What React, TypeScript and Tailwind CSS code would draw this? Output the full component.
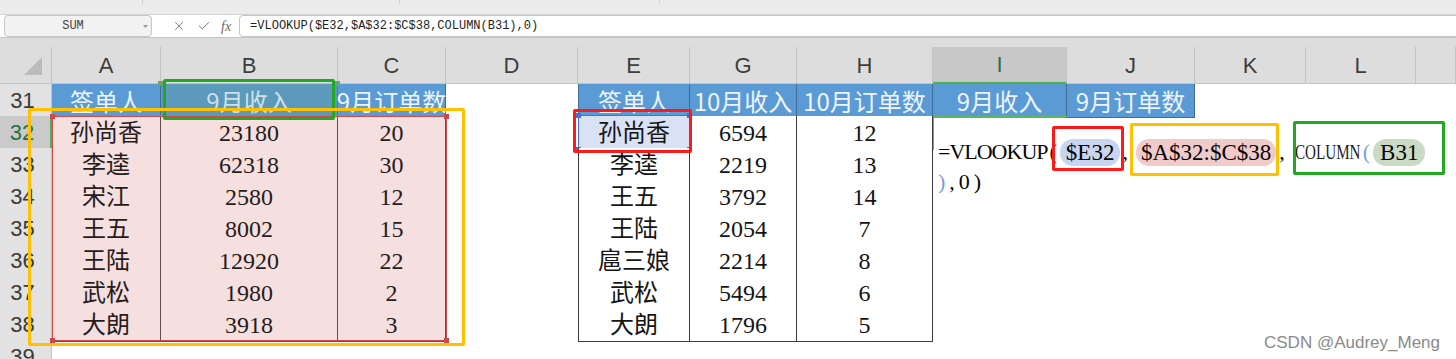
import React from 'react';
import { X, Check } from 'lucide-react';

const GRID =
  'grid grid-cols-[52px_109px_177px_108px_132px_112px_107px_136px_134px_128px_111px_110px_1fr]';

const LETTERS = ['A', 'B', 'C', 'D', 'E', 'G', 'H', 'I', 'J', 'K', 'L', ''];

const LEFT = [
  ['孙尚香', '23180', '20'],
  ['李逵', '62318', '30'],
  ['宋江', '2580', '12'],
  ['王五', '8002', '15'],
  ['王陆', '12920', '22'],
  ['武松', '1980', '2'],
  ['大朗', '3918', '3'],
];

const RIGHT = [
  ['孙尚香', '6594', '12'],
  ['李逵', '2219', '13'],
  ['王五', '3792', '14'],
  ['王陆', '2054', '7'],
  ['扈三娘', '2214', '8'],
  ['武松', '5494', '6'],
  ['大朗', '1796', '5'],
];

type Kind = 'empty' | 'blue' | 'blueSel' | 'pink' | 'white' | 'sel';

const KIND: Record<Kind, string> = {
  empty: '',
  blue: "bg-[#5b9bd5] text-[#eef4fb] border-r border-b border-[#3f6d98] font-['Noto_Sans_CJK_SC',sans-serif] text-[24px]",
  blueSel:
    "bg-[#5b9aba] text-[#cfe0ea] border-r border-b border-[#4a7f99] font-['Noto_Sans_CJK_SC',sans-serif] text-[24px]",
  pink: "bg-[#f5dfdf] text-[#261c1c] border-r border-b border-[#5f4f4f] font-['Liberation_Serif','Noto_Sans_CJK_SC',serif] text-[24px]",
  white:
    "bg-white text-[#151515] border-r border-b border-[#3c3c3c] font-['Liberation_Serif','Noto_Sans_CJK_SC',serif] text-[24px]",
  sel: "bg-[#d9e2f5] text-[#151515] border-r border-b border-[#3c3c3c] font-['Liberation_Serif','Noto_Sans_CJK_SC',serif] text-[24px]",
};

function Cell({
  kind = 'empty',
  className = '',
  children,
}: {
  kind?: Kind;
  className?: string;
  children?: React.ReactNode;
}) {
  return (
    <div
      className={`relative h-full flex items-center justify-center whitespace-nowrap leading-none ${KIND[kind]} ${className}`}
    >
      {children}
    </div>
  );
}

function RowHead({ n, active = false }: { n: number; active?: boolean }) {
  return (
    <div
      className={`h-full flex items-center justify-center pr-[6px] border-b border-[#c9c9c9] font-['Liberation_Sans',sans-serif] text-[22px] ${
        active
          ? 'bg-[#cacaca] text-[#217346] border-r-2 border-r-[#4caf50]'
          : 'bg-[#e2e2e2] text-[#3a3a3a] border-r border-r-[#c2c2c2]'
      }`}
    >
      {n}
    </div>
  );
}

function Handle({ className }: { className: string }) {
  return <div className={`absolute w-[5px] h-[5px] ${className}`} />;
}

function Pill({ className, children }: { className: string; children: React.ReactNode }) {
  return (
    <span className={`h-[27px] flex items-center rounded-[13px] leading-none ${className}`}>
      {children}
    </span>
  );
}

function FormulaEditor() {
  return (
    <div className="absolute left-[4px] top-[20px] w-[520px] z-10 text-[#050505] font-['Liberation_Serif',serif] leading-none">
      <div className="h-[30px] flex items-center whitespace-nowrap">
        <span className="text-[22px] tracking-[-1px]">=VLOOKUP</span>
        <span className="text-[22px] ml-[2px]">(</span>
        <Pill className="ml-[3px] px-[6px] bg-[#c8d5f0] text-[23px]">$E32</Pill>
        <span className="text-[22px] ml-[2px]">,</span>
        <Pill className="ml-[8px] px-[5px] bg-[#f1caca] text-[23px]">$A$32:$C$38</Pill>
        <span className="text-[22px] ml-[3px]">,</span>
        <span className="ml-[10px] w-[64px] overflow-visible">
          <span className="inline-block origin-left scale-x-[0.72] text-[21px] text-[#1c1c1c]">
            COLUMN
          </span>
        </span>
        <span className="text-[22px] ml-[4px] text-[#7c9ce0]">(</span>
        <Pill className="ml-[3px] px-[7px] bg-[#cadac4] text-[23px]">B31</Pill>
      </div>
      <div className="h-[30px] flex items-center whitespace-nowrap text-[22px] tracking-[4px]">
        <span className="text-[#7c9ce0]">)</span>
        <span>,0)</span>
      </div>
    </div>
  );
}

export default function App() {
  return (
    <div className="relative w-[1456px] h-[359px] overflow-hidden bg-white">
      {/* tab strip */}
      <div className="h-[15px] bg-[#ececec] border-b border-[#d3d3d3] flex">
        <div className="w-[143px] h-[4px] border-r border-[#d0d0d0]" />
        <div className="w-[257px] h-[4px] border-r border-[#d0d0d0]" />
        <div className="w-[260px] h-[4px] border-r border-[#d0d0d0]" />
      </div>

      {/* formula bar */}
      <div className="h-[23px] flex items-start bg-white border-b border-[#c6c6c6]">
        <div className="ml-[4px] w-[148px] h-[22px] rounded-[4px] border border-[#c6c6c6] bg-[#f2f2f2] relative flex items-center justify-center pr-[10px] font-['Liberation_Mono',monospace] text-[12px] text-[#444]">
          SUM
          <svg className="absolute right-[3px] top-[9px]" width="5" height="3" viewBox="0 0 5 3">
            <path d="M0 0 L5 0 L2.5 3 Z" fill="#9a9a9a" />
          </svg>
        </div>
        <div className="h-[22px] flex items-center ml-[20px] text-[#6a6a6a]">
          <X size={14} strokeWidth={1.4} />
        </div>
        <div className="h-[22px] flex items-center ml-[11px] text-[#6a6a6a]">
          <Check size={14} strokeWidth={1.6} />
        </div>
        <div className="h-[22px] flex items-center ml-[10px] italic font-['Liberation_Serif',serif] text-[14px] text-[#6a6a6a]">
          fx
        </div>
        <div className="ml-[8px] flex-1 -mr-[10px] h-[22px] rounded-[4px] border border-[#c6c6c6] bg-white flex items-center pl-[10px] font-['Liberation_Mono',monospace] text-[12px] text-[#1e1e1e]">
          =VLOOKUP($E32,$A$32:$C$38,COLUMN(B31),0)
        </div>
      </div>

      {/* column headers */}
      <div className={`${GRID} h-[46px] bg-[#dddddd] items-end`}>
        <div className="relative h-[37px] border-r border-b border-[#c3c3c3]">
          <svg className="absolute left-[24px] top-[10px]" width="18" height="18" viewBox="0 0 18 18">
            <path d="M18 0 L18 18 L0 18 Z" fill="#bcbcbc" />
          </svg>
        </div>
        {LETTERS.map((l, i) => (
          <div
            key={i}
            className={`h-[37px] flex items-center justify-center border-r border-[#c3c3c3] font-['Liberation_Sans',sans-serif] text-[22px] ${
              l === 'I'
                ? 'bg-[#c8c8c8] text-[#217346] border-b-2 border-b-[#4caf50]'
                : 'text-[#3e3e3e] border-b border-b-[#c3c3c3]'
            }`}
          >
            {l}
          </div>
        ))}
      </div>

      {/* row 31 */}
      <div className={`${GRID} h-[32px]`}>
        <RowHead n={31} />
        <Cell kind="blue">签单人</Cell>
        <Cell kind="blueSel">
          9月收入
          <Handle className="-left-[3px] -top-[3px] bg-[#6aa46a]" />
          <Handle className="-right-[3px] -top-[3px] bg-[#6aa46a]" />
          <Handle className="-left-[3px] -bottom-[3px] bg-[#6aa46a]" />
          <Handle className="-right-[3px] -bottom-[3px] bg-[#6aa46a]" />
        </Cell>
        <Cell kind="blue">9月订单数</Cell>
        <Cell />
        <Cell kind="blue" className="border-l">签单人</Cell>
        <Cell kind="blue">10月收入</Cell>
        <Cell kind="blue">10月订单数</Cell>
        <Cell kind="blue" className="border-b-[#5cb85c]">9月收入</Cell>
        <Cell kind="blue">9月订单数</Cell>
        <Cell />
        <Cell />
        <Cell />
      </div>

      {/* rows 32-38 */}
      {LEFT.map((row, i) => (
        <div key={i} className={`${GRID} h-[32px]`}>
          <RowHead n={32 + i} active={i === 0} />
          {row.map((v, j) => (
            <Cell key={j} kind="pink">
              {v}
            </Cell>
          ))}
          <Cell />
          {RIGHT[i].map((v, j) =>
            i === 0 && j === 0 ? (
              <Cell key={j} kind="sel" className="border-l">
                <div className="absolute left-[-1px] top-[-1px] right-[-1px] bottom-[-1px] border border-[#4a6fd0]" />
                <Handle className="-left-[3px] -top-[3px] bg-[#4a6fd0]" />
                <Handle className="-right-[3px] -top-[3px] bg-[#4a6fd0]" />
                <Handle className="-left-[3px] -bottom-[3px] bg-[#4a6fd0]" />
                <Handle className="-right-[3px] -bottom-[3px] bg-[#4a6fd0]" />
                <span className="relative">{v}</span>
              </Cell>
            ) : (
              <Cell key={j} kind="white" className={j === 0 ? 'border-l' : ''}>
                {v}
              </Cell>
            ),
          )}
          {i === 0 ? (
            <div className="relative h-full border-l border-t border-[#5cb85c]">
              <FormulaEditor />
            </div>
          ) : (
            <Cell />
          )}
          <Cell />
          <Cell />
          <Cell />
          <Cell />
        </div>
      ))}

      {/* row 39 */}
      <div className={`${GRID} h-[32px]`}>
        <RowHead n={39} />
      </div>

      {/* range highlight A32:C38 */}
      <div className="absolute left-[52px] top-[116px] w-[395px] h-[225px] border border-[#d04a4c] pointer-events-none">
        <Handle className="-left-[3px] -top-[3px] bg-[#c94a4a]" />
        <Handle className="-right-[3px] -top-[3px] bg-[#c94a4a]" />
        <Handle className="-left-[3px] -bottom-[3px] bg-[#c94a4a]" />
        <Handle className="-right-[3px] -bottom-[3px] bg-[#c94a4a]" />
      </div>

      {/* annotation boxes */}
      <div className="absolute left-[163px] top-[79px] w-[172px] h-[41px] border-[3px] border-[#22a822] rounded-[2px]" />
      <div className="absolute left-[28px] top-[108px] w-[437px] h-[238px] border-[3px] border-[#ffc000] rounded-[2px]" />
      <div className="absolute left-[573px] top-[109px] w-[119px] h-[44px] border-[3px] border-[#ff1a1a] rounded-[2px]" />
      <div className="absolute left-[1052px] top-[126px] w-[72px] h-[45px] border-[3px] border-[#ff1a1a] rounded-[2px] z-20" />
      <div className="absolute left-[1130px] top-[123px] w-[149px] h-[53px] border-[3px] border-[#ffc000] rounded-[2px] z-20" />
      <div className="absolute left-[1293px] top-[121px] w-[152px] h-[54px] border-[3px] border-[#22a822] rounded-[2px] z-20" />

      {/* watermark */}
      <div className="absolute right-[16px] bottom-[8px] font-['Liberation_Sans',sans-serif] text-[17px] text-[#8a8a8a] leading-none">
        CSDN @Audrey_Meng
      </div>
    </div>
  );
}
